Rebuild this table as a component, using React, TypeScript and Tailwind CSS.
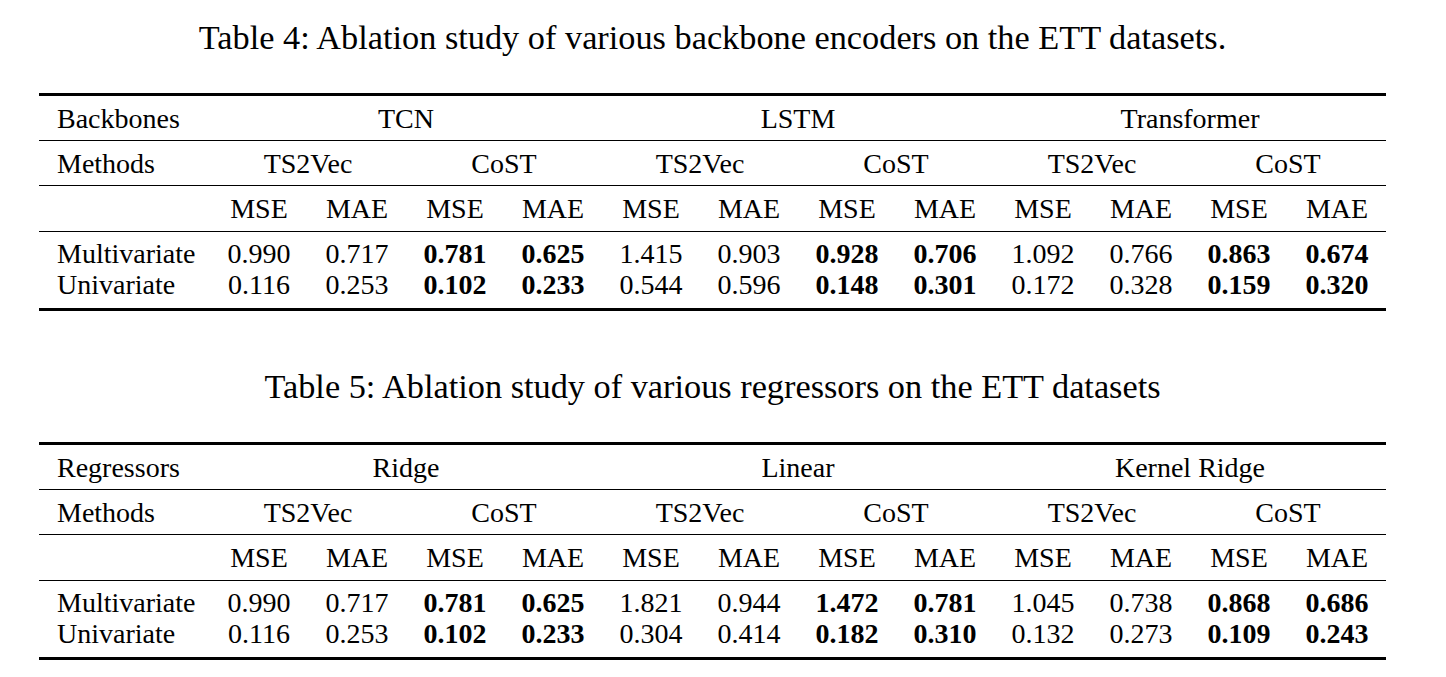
import React from "react";

type TableData = {
  title: string;
  groupLabel: string;
  groups: string[];
  rows: { name: string; values: string[] }[];
};

const tables: TableData[] = [
  {
    title: "Table 4: Ablation study of various backbone encoders on the ETT datasets.",
    groupLabel: "Backbones",
    groups: ["TCN", "LSTM", "Transformer"],
    rows: [
      {
        name: "Multivariate",
        values: ["0.990", "0.717", "0.781", "0.625", "1.415", "0.903", "0.928", "0.706", "1.092", "0.766", "0.863", "0.674"],
      },
      {
        name: "Univariate",
        values: ["0.116", "0.253", "0.102", "0.233", "0.544", "0.596", "0.148", "0.301", "0.172", "0.328", "0.159", "0.320"],
      },
    ],
  },
  {
    title: "Table 5: Ablation study of various regressors on the ETT datasets",
    groupLabel: "Regressors",
    groups: ["Ridge", "Linear", "Kernel Ridge"],
    rows: [
      {
        name: "Multivariate",
        values: ["0.990", "0.717", "0.781", "0.625", "1.821", "0.944", "1.472", "0.781", "1.045", "0.738", "0.868", "0.686"],
      },
      {
        name: "Univariate",
        values: ["0.116", "0.253", "0.102", "0.233", "0.304", "0.414", "0.182", "0.310", "0.132", "0.273", "0.109", "0.243"],
      },
    ],
  },
];

const grid = "grid grid-cols-[171px_repeat(12,98px)]";

const AblationTable = ({ data }: { data: TableData }) => {
  return (
    <div className="ml-[39px] w-[1347px] flex flex-col">
      <div className="text-center text-[34.3px] leading-[40px] h-[40px] whitespace-nowrap">{data.title}</div>
      <div className="mt-[36px] border-t-[3px] border-b-[3px] border-black">
        {/* group row */}
        <div className={`${grid} h-[45px] items-center border-b border-black`}>
          <div className="pl-[18px]">{data.groupLabel}</div>
          {data.groups.map((g) => (
            <div key={g} className="col-span-4 text-center">
              {g}
            </div>
          ))}
        </div>
        {/* methods row */}
        <div className={`${grid} h-[45px] items-center border-b border-black`}>
          <div className="pl-[18px]">Methods</div>
          {data.groups.map((g) => (
            <React.Fragment key={g}>
              <div className="col-span-2 text-center">TS2Vec</div>
              <div className="col-span-2 text-center">CoST</div>
            </React.Fragment>
          ))}
        </div>
        {/* metric row */}
        <div className={`${grid} h-[46px] items-center border-b border-black`}>
          <div />
          {Array.from({ length: 6 }).map((_, i) => (
            <React.Fragment key={i}>
              <div className="text-center">MSE</div>
              <div className="text-center">MAE</div>
            </React.Fragment>
          ))}
        </div>
        {/* data rows */}
        <div className="pt-[6px] pb-[8px]">
          {data.rows.map((r) => (
            <div key={r.name} className={`${grid} h-[31px] items-center`}>
              <div className="pl-[18px]">{r.name}</div>
              {r.values.map((v, i) => (
                <div key={i} className={`text-center ${i % 4 >= 2 ? "font-bold" : ""}`}>
                  {v}
                </div>
              ))}
            </div>
          ))}
        </div>
      </div>
    </div>
  );
};

export default function App() {
  return (
    <div className="w-[1446px] h-[677px] bg-white text-black font-['Liberation_Serif',serif] text-[28px] leading-[31px] pt-[17px] overflow-hidden">
      <AblationTable data={tables[0]} />
      <div className="h-[55px]" />
      <AblationTable data={tables[1]} />
    </div>
  );
}
